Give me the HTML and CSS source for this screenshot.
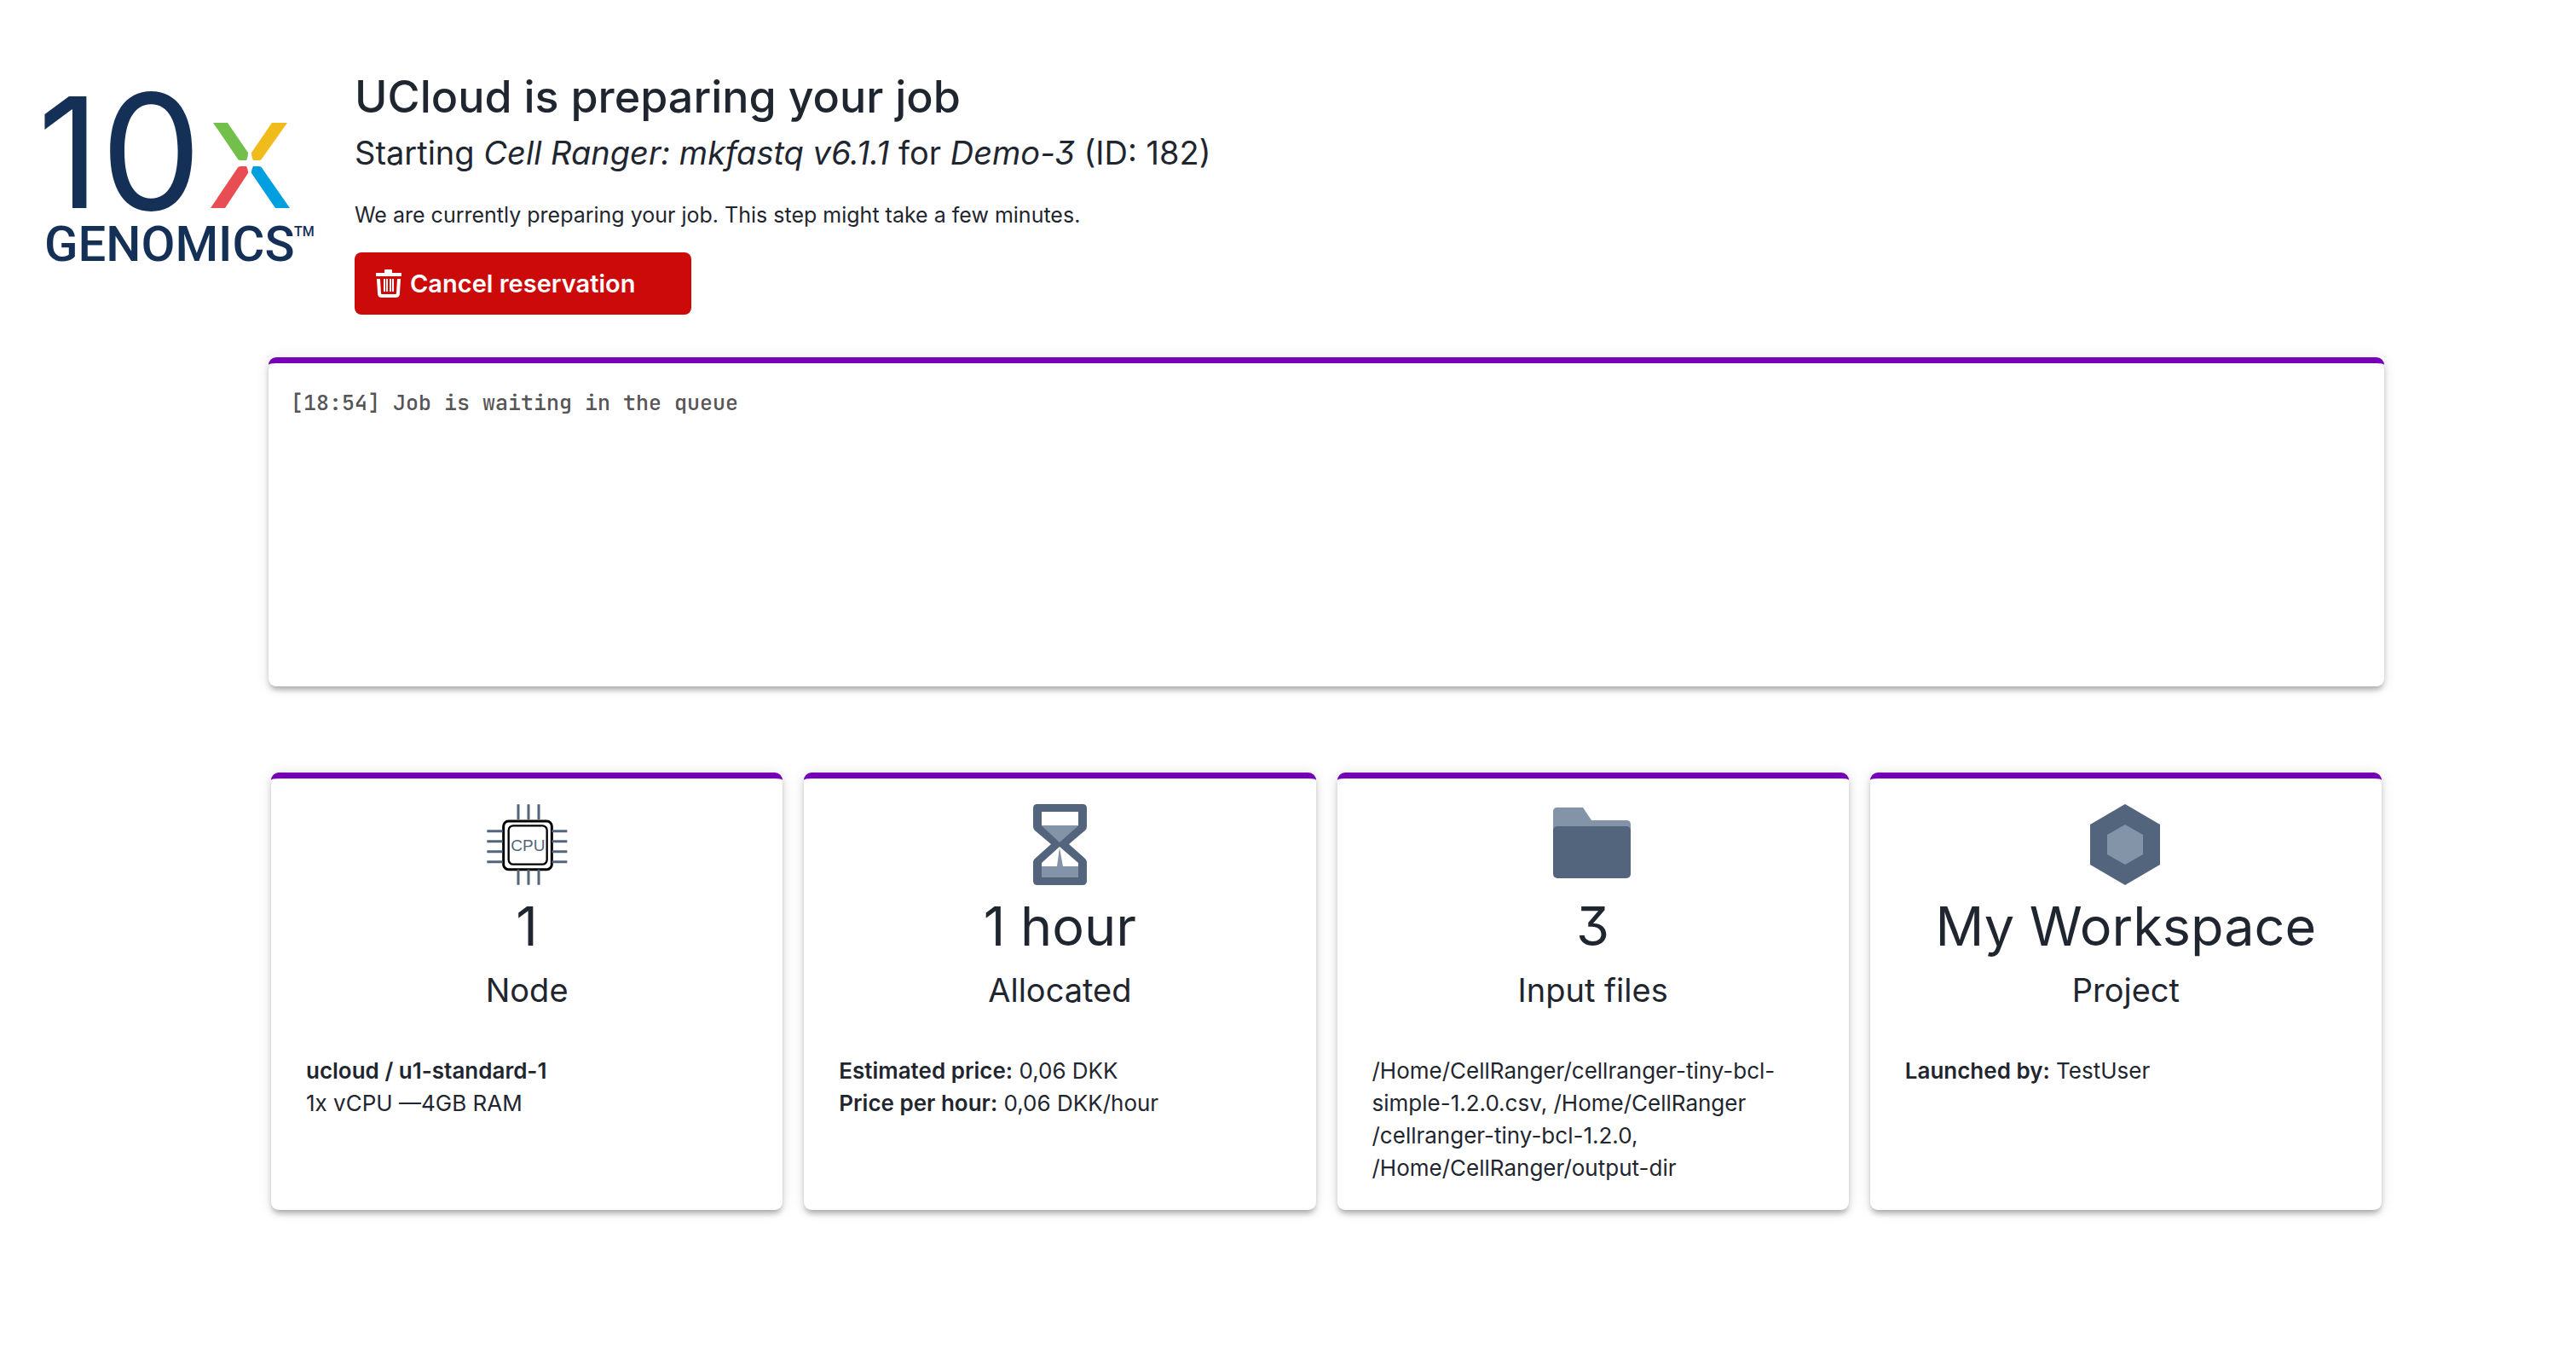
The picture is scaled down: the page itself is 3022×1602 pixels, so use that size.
FILE: index.html
```html
<!DOCTYPE html>
<html lang="en">
<head>
<meta charset="utf-8">
<title>UCloud is preparing your job</title>
<link rel="stylesheet" href="styles.css">
</head>
<body>
<header class="job-header">
  <svg class="logo" viewBox="-8 -38 336 262" role="img" aria-label="10x Genomics">
    <g class="logo-ink">
      <text class="logo-one" x="-4" y="148">1</text>
      <text class="logo-zero" x="70" y="150">0</text>
      <text class="logo-name" x="4" y="210">GENOMICS</text>
      <text class="logo-mark" x="297" y="181">TM</text>
    </g>
    <path fill="#73bf4b" d="M202 48h17l24 35c0 4-1 7-2 9h-7c-2 0-3-1-4-3z"/>
    <path fill="#f0bc1b" d="M289 48h-18l-24 35c0 4 1 7 2 9h7c2 0 3-1 4-3z"/>
    <path fill="#e84d53" d="M199 148h17l27-41c0-4-1-6-2-8h-6c-3 0-4 1-5 3z"/>
    <path fill="#009fe0" d="M292 148h-17l-28-41c0-4 1-6 2-8h6c3 0 4 1 5 3z"/>
  </svg>
  <div class="job-intro">
    <h1>UCloud is preparing your job</h1>
    <h2>Starting <i>Cell Ranger: mkfastq v6.1.1</i> for <i>Demo-3</i> (ID: 182)</h2>
    <p>We are currently preparing your job. This step might take a few minutes.</p>
    <button class="cancel" type="button">
      <svg class="trash" viewBox="0 0 30 33" aria-hidden="true">
        <path fill="#fff" d="M0 4h10V1q0-1 1-1h7q1 0 1 1v3h11v4H0z"/>
        <path fill="none" stroke="#fff" stroke-width="4" d="M3 11l1 17q0 3 3 3h16q3 0 3-3l1-17"/>
        <path stroke="#fff" stroke-width="2" d="M10 11v15M13 11v15M17 11v15M20 11v15"/>
      </svg>
      <span>Cancel reservation</span>
    </button>
  </div>
</header>
<main>
  <section class="panel log">[18:54] Job is waiting in the queue</section>
  <div class="cards">
    <section class="panel card">
      <svg class="icon" viewBox="30 36 288 288" aria-hidden="true">
        <rect x="92" y="99" width="170" height="170" rx="18" fill="#fff" stroke="#000" stroke-width="9"/>
        <rect x="110" y="115" width="135" height="136" rx="16" fill="#fff" stroke="#000" stroke-width="7"/>
        <path stroke="#53657d" stroke-width="9" d="M144 40v54M180 40v54M216 40v54M144 269v54M180 269v54M216 269v54M34 134h55M34 170h55M34 206h55M34 242h55M262 134h54M262 170h54M262 206h54M262 242h54"/>
        <text class="cpu-text" x="118" y="204">CPU</text>
      </svg>
      <h3>1</h3>
      <h4>Node</h4>
      <div class="details"><b>ucloud / u1-standard-1</b><br>1x vCPU —4GB RAM</div>
    </section>
    <section class="panel card">
      <svg class="icon" viewBox="0 0 96 96" aria-hidden="true">
        <path fill="#8393a8" d="M27 26h43L48 47zM27 74h18l3-22 4 22h18v14H27z"/>
        <path fill="#53657d" fill-rule="evenodd" d="M22 1h53q5 0 5 5v21q0 3-2 5L59 48l19 17q2 2 2 4v22q0 5-5 5H22q-5 0-5-5V69q0-2 2-4l19-17L19 32q-2-2-2-5V6q0-5 5-5zM27 10v16l21 20 22-20V10zM48 51L27 70v17h43V70z"/>
      </svg>
      <h3>1 hour</h3>
      <h4>Allocated</h4>
      <div class="details"><b>Estimated price:</b> 0,06 DKK<br><b>Price per hour:</b> 0,06 DKK/hour</div>
    </section>
    <section class="panel card">
      <svg class="icon" viewBox="0 0 96 96" aria-hidden="true">
        <path fill="#8393a8" d="M1 40V10q0-5 5-5h30l10 15h41q5 0 5 5v15z"/>
        <rect x="1" y="27" width="91" height="61" rx="5" fill="#53657d"/>
      </svg>
      <h3>3</h3>
      <h4>Input files</h4>
      <div class="details">/Home/CellRanger/cellranger-tiny-bcl-<br>simple-1.2.0.csv, /Home/CellRanger<br>/cellranger-tiny-bcl-1.2.0,<br>/Home/CellRanger/output-dir</div>
    </section>
    <section class="panel card">
      <svg class="icon" viewBox="0 0 96 96" aria-hidden="true">
        <path fill="#53657d" d="M47 1l41 24v47L47 96 6 72V25z"/>
        <path fill="#8393a8" d="M47 25l21 12v23L47 72 26 60V37z"/>
      </svg>
      <h3>My Workspace</h3>
      <h4>Project</h4>
      <div class="details"><b>Launched by:</b> TestUser</div>
    </section>
  </div>
</main>
</body>
</html>
```
FILE: styles.css
```css
* { box-sizing: border-box; }

body {
  margin: 0;
  background: #fff;
  color: #1f262f;
  font-family: Inter, "Liberation Sans", sans-serif;
  font-size: 26px;
  line-height: 38px;
  font-feature-settings: "cv09";
}

h1, h2, h3, h4, p { margin: 0; font-weight: 400; }

.job-header {
  display: flex;
  gap: 40px;
  padding: 80px 40px 50px;
}

.logo {
  flex: none;
  width: 336px;
  height: 262px;
  margin-top: -22px;
}
.logo-ink { fill: #153057; }
.logo-one { font: 400 180px Inter, sans-serif; }
.logo-zero { font: 400 188px Inter, sans-serif; }
.logo-name { font: 500 58px Roboto, sans-serif; }
.logo-mark { font: 500 16px Roboto, sans-serif; }

h1 { font-size: 52px; line-height: 68px; font-weight: 500; }
h2 { font-size: 38px; line-height: 62px; }
.job-intro p { margin: 23px 0 25px; font-size: 25px; }

.cancel {
  display: flex;
  align-items: center;
  gap: 10px;
  width: 395px;
  height: 73px;
  padding: 0 25px;
  border: 0;
  border-radius: 8px;
  background: #cc0a0a;
  color: #fff;
  font: 600 29px/38px Inter, "Liberation Sans", sans-serif;
}
.trash { width: 30px; height: 33px; }

main { padding: 0 225px 183px 315px; }

.panel {
  border-top: 7px solid #7500b8;
  border-radius: 9px;
  background: #fff;
  box-shadow: 0 6px 6px -4px rgba(0, 0, 0, .2), 0 5px 6px rgba(0, 0, 0, .14), 0 1px 16px rgba(0, 0, 0, .12);
}

.log {
  min-height: 386px;
  padding: 27px 26px;
  color: #555;
  font-family: "JetBrains Mono", "DejaVu Sans Mono", monospace;
  font-size: 25px;
  font-weight: 500;
}

.cards {
  display: grid;
  grid-template-columns: repeat(4, 1fr);
  gap: 25px;
  margin: 101px 3px 0;
}
.card {
  padding: 29px 41px 30px;
  text-align: center;
}
.icon {
  display: block;
  width: 96px;
  height: 96px;
  margin: 0 auto 8px;
}
.cpu-text {
  fill: #53657d;
  font: 57px "Liberation Sans", Arial, sans-serif;
}
h3 { font-size: 63px; line-height: 80px; }
h4 { font-size: 38px; line-height: 70px; }
.details { margin-top: 41px; text-align: left; }
.details b { font-weight: 600; }
```
